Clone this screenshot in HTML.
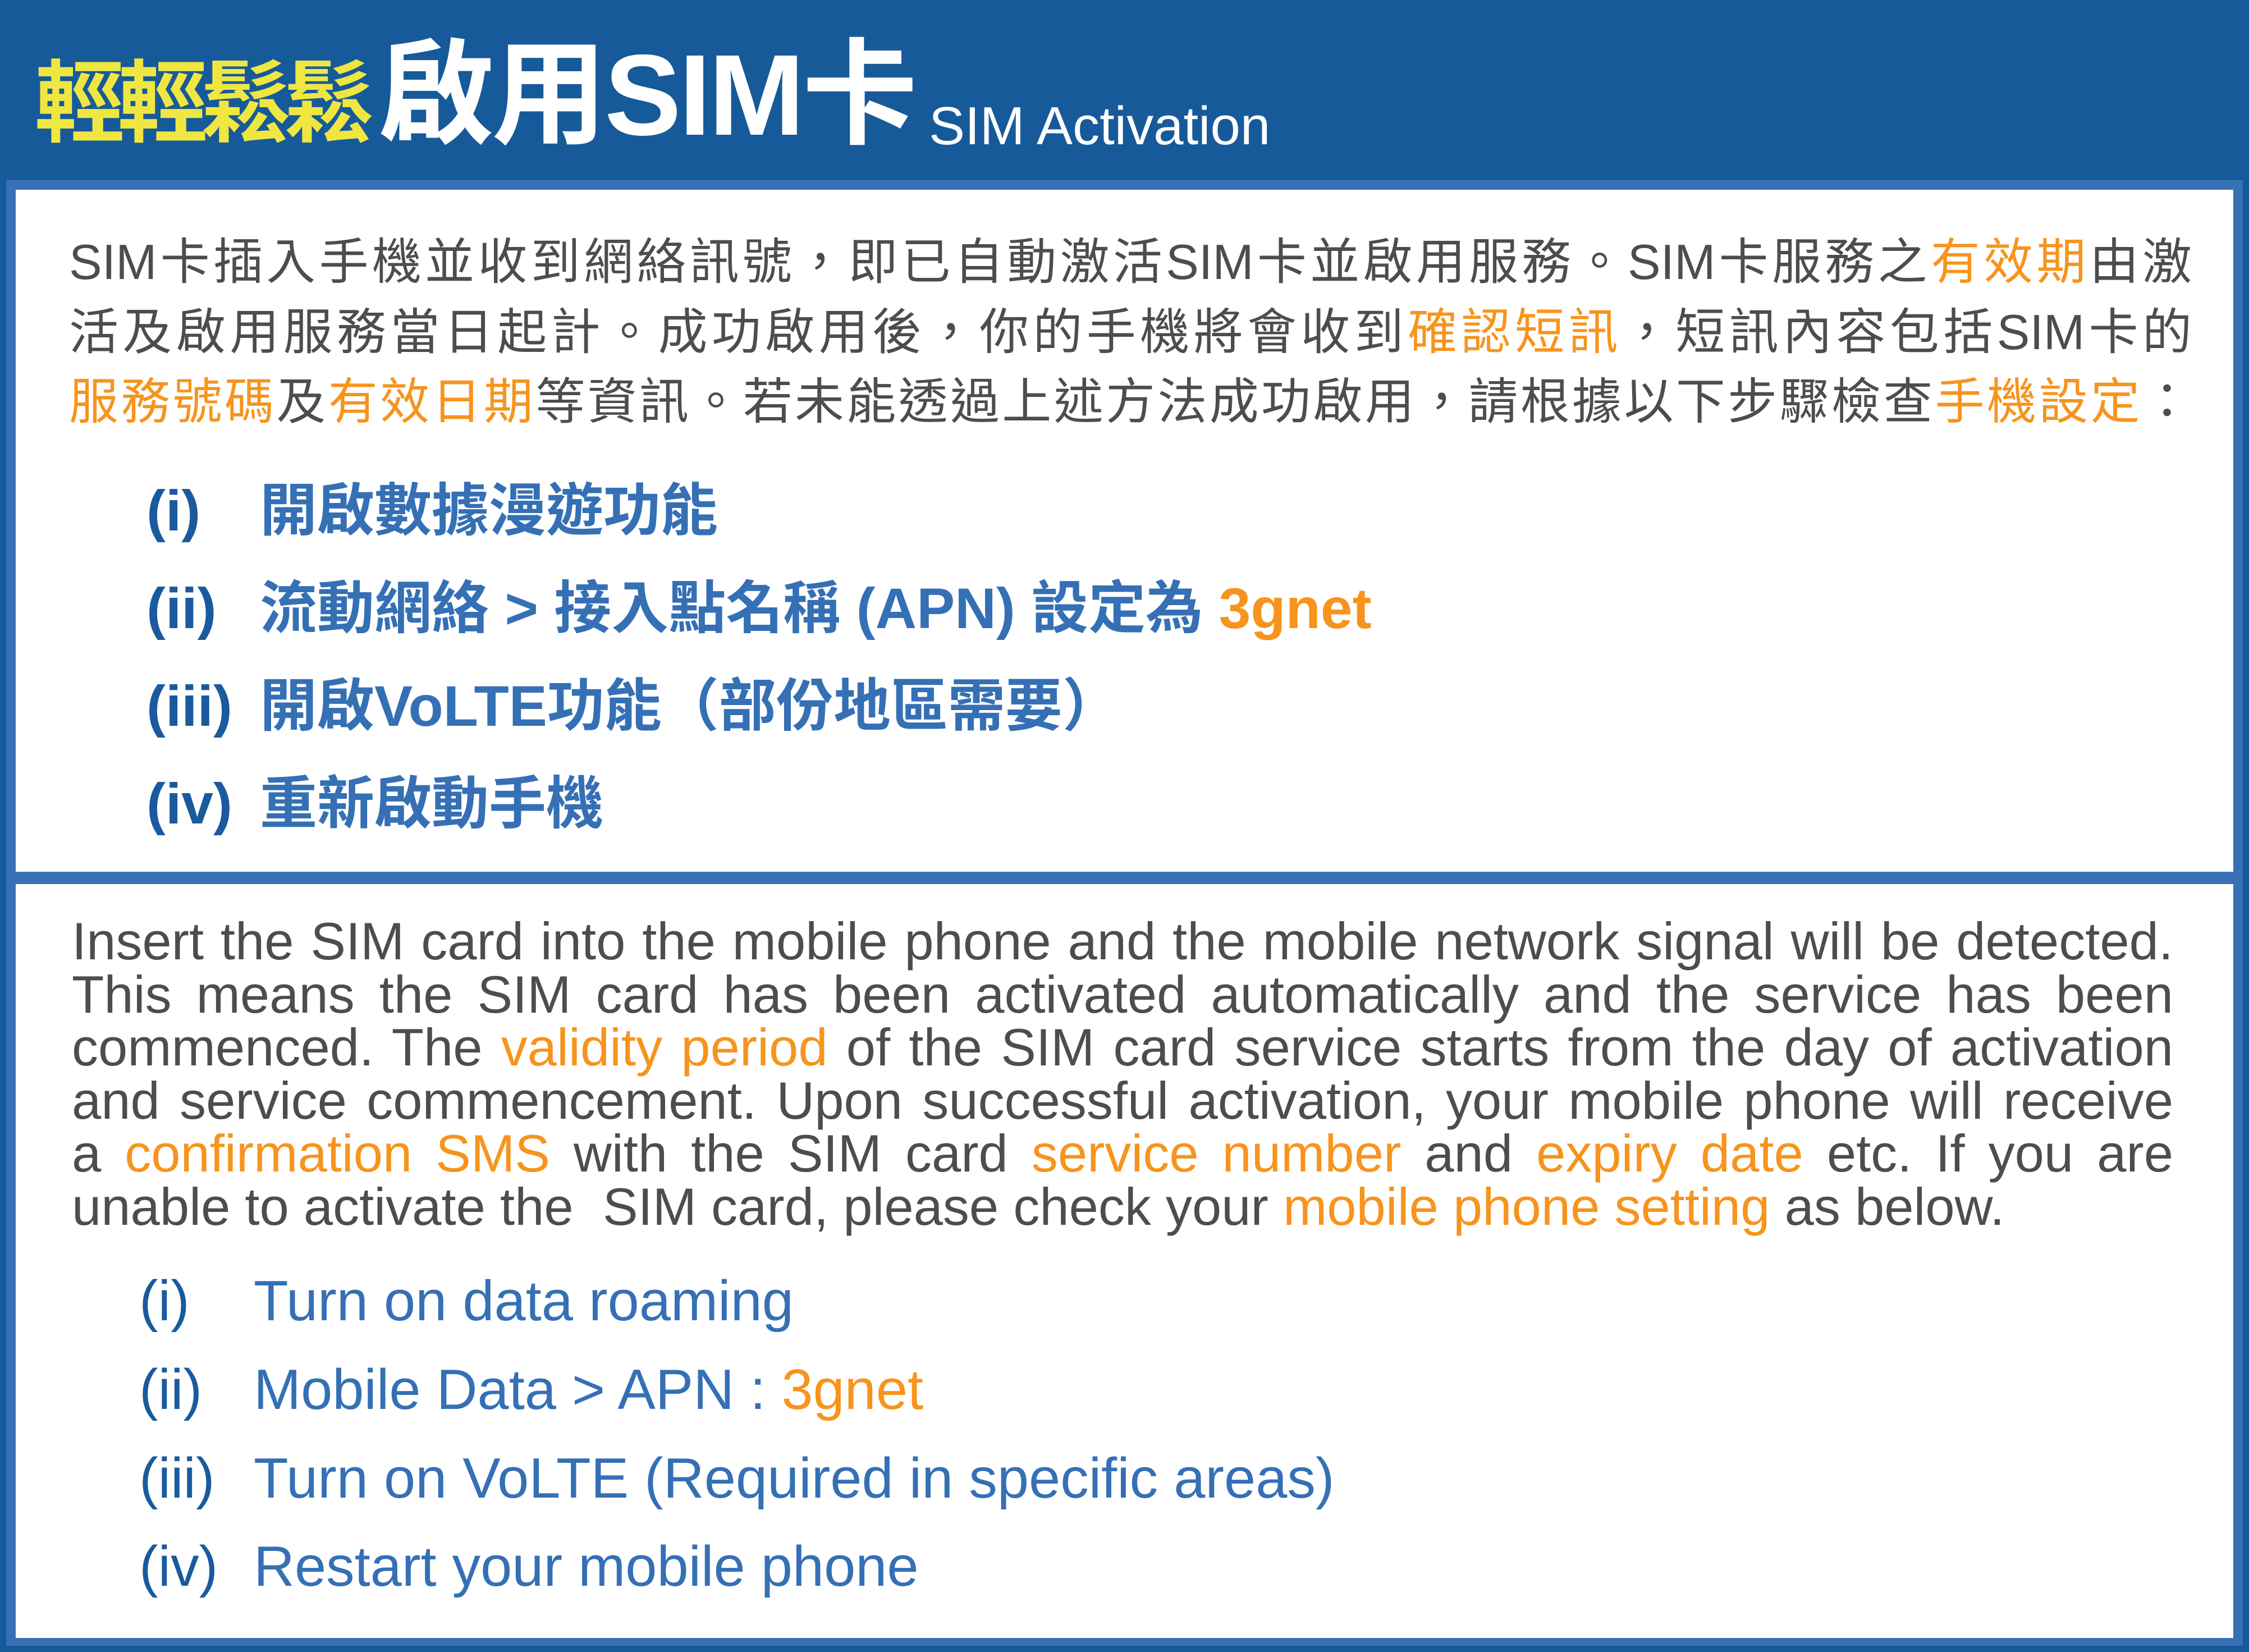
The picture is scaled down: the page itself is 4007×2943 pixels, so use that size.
<!DOCTYPE html>
<html><head><meta charset="utf-8"><style>
*{margin:0;padding:0;box-sizing:border-box}
body{width:4007px;height:2943px;background:#175a9a;position:relative;overflow:hidden;font-family:"Liberation Sans","Noto Sans CJK TC",sans-serif}
.frame{position:absolute;left:11px;top:321px;width:3985px;height:2611px;background:#3870b5}
.p{position:absolute;left:28px;width:3951px;background:#fff}
.a{position:absolute;white-space:nowrap}
.o{color:#f7941d}
.zh{position:absolute;left:123px;width:3782px;font-size:88px;color:#4d4d4d;text-align:justify;text-align-last:justify;white-space:nowrap;height:124px;line-height:124px}
.en{position:absolute;left:128px;width:3744px;font-size:94px;color:#4d4d4d;text-align:justify;text-align-last:justify;white-space:nowrap;line-height:95px}
.li{position:absolute;font-weight:bold;color:#3570b5;white-space:nowrap}
.li b{position:absolute;color:#1a5a9e}
</style></head><body>
<div class="a" style="left:62px;top:85px;font-size:160px;font-weight:bold;color:#f0e642;line-height:200px;letter-spacing:-12px">輕輕鬆鬆</div>
<div class="a" style="left:675px;top:55px;font-size:205px;font-weight:bold;color:#fff;line-height:230px;letter-spacing:-4px">啟用SIM卡</div>
<div class="a" style="left:1655px;top:170px;font-size:96px;color:#fff;line-height:110px">SIM Activation</div>
<div class="frame"></div>
<div class="p" style="top:338px;height:1215px"></div>
<div class="p" style="top:1575px;height:1343px"></div>

<div class="zh" style="top:405px">SIM卡插入手機並收到網絡訊號，即已自動激活SIM卡並啟用服務。SIM卡服務之<span class="o">有效期</span>由激</div>
<div class="zh" style="top:530px">活及啟用服務當日起計。成功啟用後，你的手機將會收到<span class="o">確認短訊</span>，短訊內容包括SIM卡的</div>
<div class="zh" style="top:654px"><span class="o">服務號碼</span>及<span class="o">有效日期</span>等資訊。若未能透過上述方法成功啟用，請根據以下步驟檢查<span class="o">手機設定</span>：</div>

<div class="li" style="left:463px;top:850px;font-size:102px;line-height:120px"><b style="left:-202px">(i)</b>開啟數據漫遊功能</div>
<div class="li" style="left:463px;top:1024px;font-size:102px;line-height:120px"><b style="left:-202px">(ii)</b>流動網絡 &gt; 接入點名稱 (APN) 設定為 <span class="o">3gnet</span></div>
<div class="li" style="left:463px;top:1198px;font-size:102px;line-height:120px"><b style="left:-202px">(iii)</b>開啟VoLTE功能（部份地區需要）</div>
<div class="li" style="left:463px;top:1372px;font-size:102px;line-height:120px"><b style="left:-202px">(iv)</b>重新啟動手機</div>

<div class="en" style="top:1629px">Insert the SIM card into the mobile phone and the mobile network signal will be detected.</div>
<div class="en" style="top:1724px">This means the SIM card has been activated automatically and the service has been</div>
<div class="en" style="top:1818px">commenced. The <span class="o">validity period</span> of the SIM card service starts from the day of activation</div>
<div class="en" style="top:1913px">and service commencement. Upon successful activation, your mobile phone will receive</div>
<div class="en" style="top:2007px">a <span class="o">confirmation SMS</span> with the SIM card <span class="o">service number</span> and <span class="o">expiry date</span> etc. If you are</div>
<div class="en" style="top:2102px;text-align:left;text-align-last:left;width:auto">unable to activate the&nbsp; SIM card, please check your <span class="o">mobile phone setting</span> as below.</div>

<div class="li" style="left:452px;top:2260px;font-size:101px;line-height:116px;font-weight:normal"><b style="left:-204px;font-weight:normal">(i)</b>Turn on data roaming</div>
<div class="li" style="left:452px;top:2418px;font-size:101px;line-height:116px;font-weight:normal"><b style="left:-204px;font-weight:normal">(ii)</b>Mobile Data &gt; APN : <span class="o">3gnet</span></div>
<div class="li" style="left:452px;top:2576px;font-size:101px;line-height:116px;font-weight:normal"><b style="left:-204px;font-weight:normal">(iii)</b>Turn on VoLTE (Required in specific areas)</div>
<div class="li" style="left:452px;top:2733px;font-size:101px;line-height:116px;font-weight:normal"><b style="left:-204px;font-weight:normal">(iv)</b>Restart your mobile phone</div>
</body></html>
